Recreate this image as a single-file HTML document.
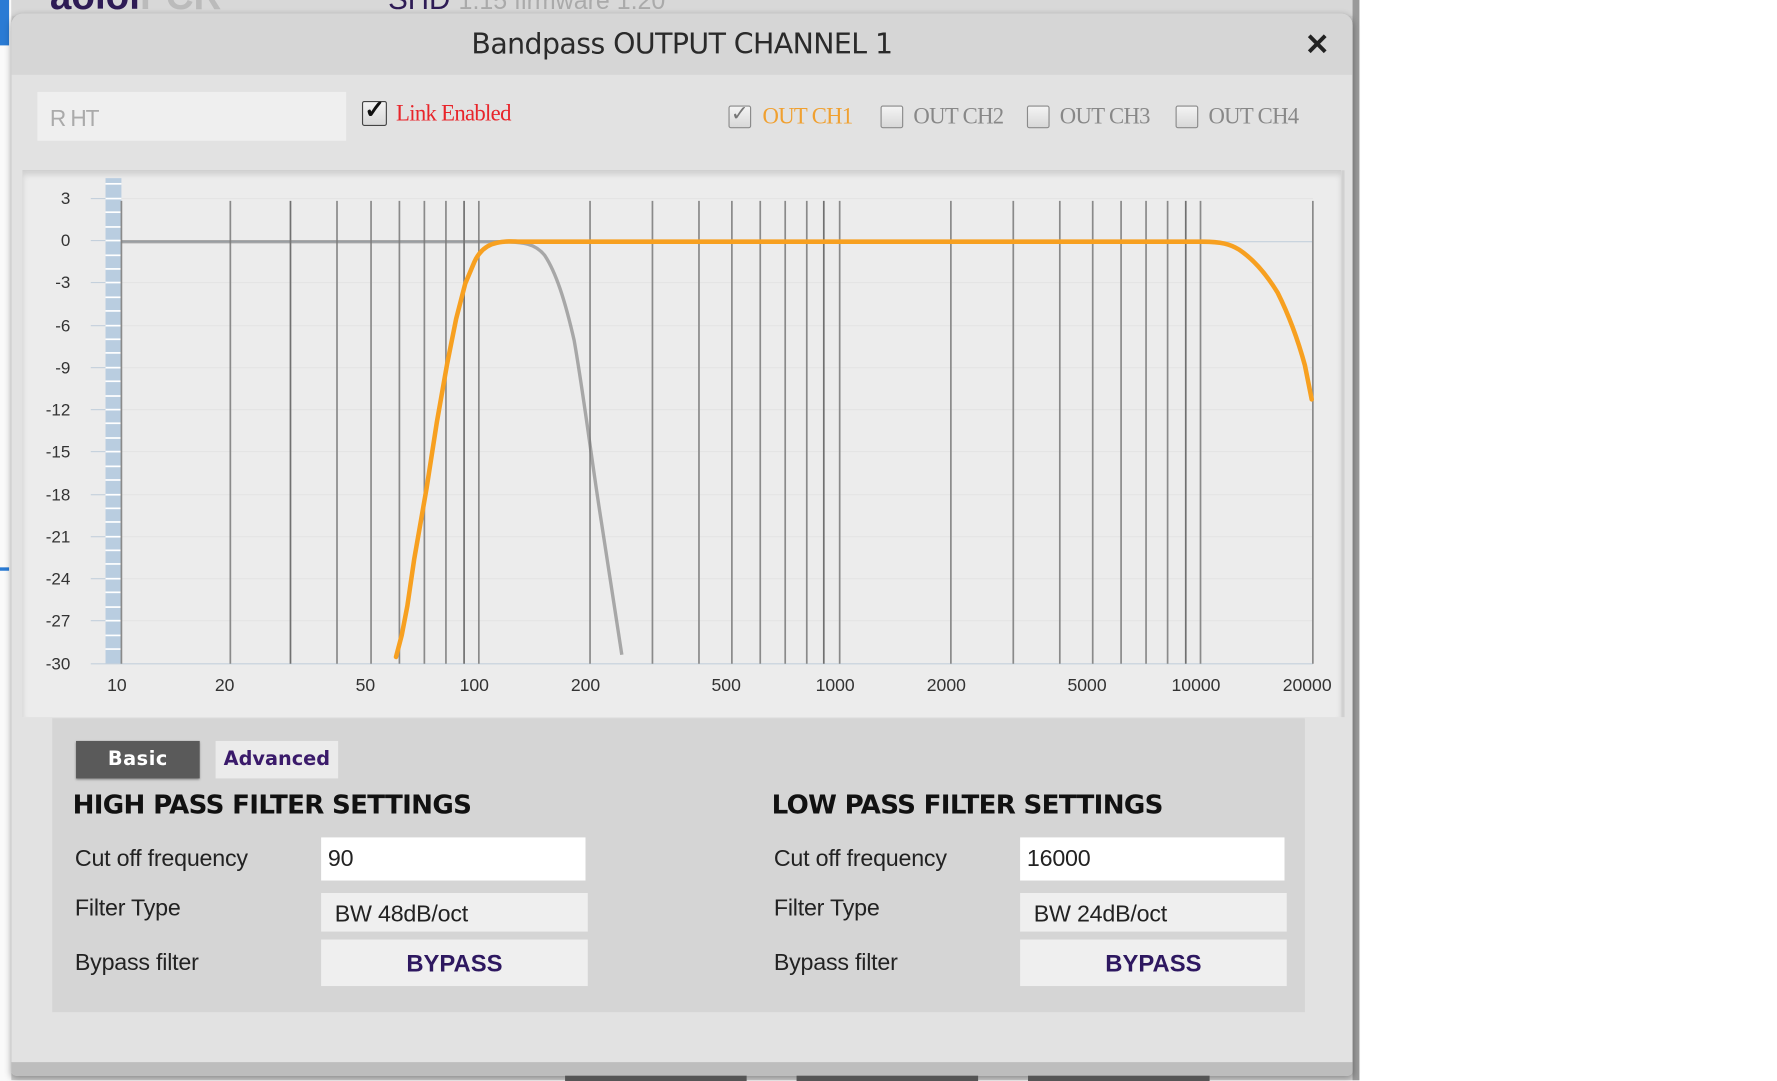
<!DOCTYPE html>
<html><head><meta charset="utf-8"><style>
html,body{margin:0;padding:0;width:1777px;height:1080px;overflow:hidden;background:#fff;font-family:"Liberation Sans",Arial,sans-serif}
#w{position:absolute;left:0;top:0;width:1566px;height:952px;transform:scale(1.1347);transform-origin:0 0}
.a{position:absolute}
.lbl{position:absolute;font-size:20.5px;color:#222;letter-spacing:-0.2px}
.serif{font-family:"Liberation Serif",serif}
.cb{position:absolute;width:20px;height:20px;border:1px solid #8a8a8a;background:linear-gradient(#f4f4f4,#d8d8d8);box-sizing:border-box;border-radius:2px}
</style></head><body><div id="w">
<div class="a" style="left:0;top:0;width:1198px;height:952px;background:#cfcfcf"></div>
<div class="a" style="left:0;top:0;width:10px;height:952px;background:#fafafa"></div>
<div class="a" style="left:0;top:0;width:8px;height:40px;background:#2a7bd4"></div>
<div class="a" style="left:0;top:500px;width:8px;height:3px;background:#2a7bd4"></div>
<div class="a" style="left:10px;top:0;width:1188px;height:14px;background:#d8d8d8"></div>
<div class="a" style="left:44px;top:-22px;font-size:34px;font-weight:bold;color:#2e1b55">aoiol<span style="color:#bbb">PCR</span></div>
<div class="a" style="left:342px;top:-16px;font-size:26px;color:#2e1b55">SHD <span style="color:#aaa;font-size:22px">1.15 firmware 1.20</span></div>
<div class="a" style="left:1192px;top:0;width:6px;height:952px;background:#9a9a9a"></div>
<div class="a" style="left:10px;top:12px;width:1182px;height:936px;background:#e2e2e2;border-radius:10px 10px 4px 4px;box-shadow:0 2px 6px rgba(0,0,0,.35)"></div>
<div class="a" style="left:10px;top:12px;width:1182px;height:54px;background:#d6d6d6;border-radius:10px 10px 0 0"></div>
<div class="a" style="left:10px;top:936px;width:1182px;height:12px;background:#bdbdbd;border-radius:0 0 4px 4px"></div>
<div class="a" style="left:10px;top:24px;width:1182px;text-align:center;font-family:'DejaVu Sans',sans-serif;font-size:25px;color:#2a2a2a;letter-spacing:-0.5px">Bandpass OUTPUT CHANNEL 1</div>
<div class="a" style="left:1150px;top:24px;font-size:26px;font-weight:bold;color:#222">✕</div>
<div class="a" style="left:33px;top:81px;width:272px;height:43px;background:#efefef"></div>
<div class="a" style="left:44px;top:94px;font-size:20px;color:#aaa;letter-spacing:-1px">R HT</div>
<div class="cb" style="left:319px;top:89px;width:22px;height:22px;border-color:#444"></div>
<div class="a" style="left:321px;top:84px;font-size:22px;font-weight:bold;color:#111">✓</div>
<div class="a serif" style="left:349px;top:89px;font-size:20px;color:#e8242a;letter-spacing:-0.6px">Link Enabled</div>
<div class="cb" style="left:642px;top:93px"></div><div class="a" style="left:644px;top:89px;font-size:19px;color:#777">✓</div>
<div class="a serif" style="left:672px;top:92px;font-size:20px;color:#f0a030;letter-spacing:-0.6px">OUT CH1</div>
<div class="cb" style="left:776px;top:93px"></div>
<div class="a serif" style="left:805px;top:92px;font-size:20px;color:#888;letter-spacing:-0.6px">OUT CH2</div>
<div class="cb" style="left:905px;top:93px"></div>
<div class="a serif" style="left:934px;top:92px;font-size:20px;color:#888;letter-spacing:-0.6px">OUT CH3</div>
<div class="cb" style="left:1036px;top:93px"></div>
<div class="a serif" style="left:1065px;top:92px;font-size:20px;color:#888;letter-spacing:-0.6px">OUT CH4</div>
<div class="a" style="left:20px;top:150px;width:1162px;height:482px;background:#ececec;box-shadow:inset 0 4px 5px rgba(0,0,0,.12);border-right:3px solid #d0d0d0"></div>
<svg class="a" style="left:0;top:0" width="1198" height="640">
<rect x="93" y="157" width="14" height="428" fill="#b9cde0"/>
<g stroke="#fff" stroke-width="1.5">
<line x1="93" y1="162" x2="107" y2="162"/><line x1="93" y1="175" x2="107" y2="175"/><line x1="93" y1="187" x2="107" y2="187"/><line x1="93" y1="200" x2="107" y2="200"/><line x1="93" y1="212" x2="107" y2="212"/><line x1="93" y1="225" x2="107" y2="225"/><line x1="93" y1="237" x2="107" y2="237"/><line x1="93" y1="249" x2="107" y2="249"/><line x1="93" y1="262" x2="107" y2="262"/><line x1="93" y1="274" x2="107" y2="274"/><line x1="93" y1="287" x2="107" y2="287"/><line x1="93" y1="299" x2="107" y2="299"/><line x1="93" y1="311" x2="107" y2="311"/><line x1="93" y1="324" x2="107" y2="324"/><line x1="93" y1="336" x2="107" y2="336"/><line x1="93" y1="349" x2="107" y2="349"/><line x1="93" y1="361" x2="107" y2="361"/><line x1="93" y1="373" x2="107" y2="373"/><line x1="93" y1="386" x2="107" y2="386"/><line x1="93" y1="398" x2="107" y2="398"/><line x1="93" y1="411" x2="107" y2="411"/><line x1="93" y1="423" x2="107" y2="423"/><line x1="93" y1="436" x2="107" y2="436"/><line x1="93" y1="448" x2="107" y2="448"/><line x1="93" y1="460" x2="107" y2="460"/><line x1="93" y1="473" x2="107" y2="473"/><line x1="93" y1="485" x2="107" y2="485"/><line x1="93" y1="497" x2="107" y2="497"/><line x1="93" y1="510" x2="107" y2="510"/><line x1="93" y1="522" x2="107" y2="522"/><line x1="93" y1="535" x2="107" y2="535"/><line x1="93" y1="547" x2="107" y2="547"/><line x1="93" y1="560" x2="107" y2="560"/><line x1="93" y1="572" x2="107" y2="572"/>
</g>
<g stroke="#e4e4e4" stroke-width="1">
<line x1="107" y1="175" x2="1157" y2="175"/><line x1="107" y1="249" x2="1157" y2="249"/><line x1="107" y1="287" x2="1157" y2="287"/><line x1="107" y1="324" x2="1157" y2="324"/><line x1="107" y1="361" x2="1157" y2="361"/><line x1="107" y1="398" x2="1157" y2="398"/><line x1="107" y1="436" x2="1157" y2="436"/><line x1="107" y1="473" x2="1157" y2="473"/><line x1="107" y1="510" x2="1157" y2="510"/><line x1="107" y1="547" x2="1157" y2="547"/>
</g>
<g stroke="#c4d0dc" stroke-width="1">
<line x1="80" y1="175" x2="93" y2="175"/><line x1="80" y1="212" x2="93" y2="212"/><line x1="80" y1="249" x2="93" y2="249"/><line x1="80" y1="287" x2="93" y2="287"/><line x1="80" y1="324" x2="93" y2="324"/><line x1="80" y1="361" x2="93" y2="361"/><line x1="80" y1="398" x2="93" y2="398"/><line x1="80" y1="436" x2="93" y2="436"/><line x1="80" y1="473" x2="93" y2="473"/><line x1="80" y1="510" x2="93" y2="510"/><line x1="80" y1="547" x2="93" y2="547"/><line x1="80" y1="585" x2="1157" y2="585"/>
<line x1="107" y1="213" x2="1157" y2="213"/>
</g>
<g stroke="#8a8a8a" stroke-width="1.5">
<line x1="107" y1="177" x2="107" y2="585"/>
<line x1="203" y1="177" x2="203" y2="585"/><line x1="256" y1="177" x2="256" y2="585" stroke="#707070"/><line x1="297" y1="177" x2="297" y2="585"/><line x1="327" y1="177" x2="327" y2="585"/><line x1="352" y1="177" x2="352" y2="585"/><line x1="374" y1="177" x2="374" y2="585"/><line x1="393" y1="177" x2="393" y2="585"/><line x1="409" y1="177" x2="409" y2="585" stroke="#707070"/><line x1="422" y1="177" x2="422" y2="585"/>
<line x1="520" y1="177" x2="520" y2="585"/><line x1="575" y1="177" x2="575" y2="585"/><line x1="616" y1="177" x2="616" y2="585"/><line x1="645" y1="177" x2="645" y2="585"/><line x1="670" y1="177" x2="670" y2="585"/><line x1="692" y1="177" x2="692" y2="585"/><line x1="711" y1="177" x2="711" y2="585"/><line x1="726" y1="177" x2="726" y2="585" stroke="#707070"/><line x1="740" y1="177" x2="740" y2="585"/>
<line x1="838" y1="177" x2="838" y2="585"/><line x1="893" y1="177" x2="893" y2="585"/><line x1="934" y1="177" x2="934" y2="585"/><line x1="963" y1="177" x2="963" y2="585"/><line x1="988" y1="177" x2="988" y2="585"/><line x1="1010" y1="177" x2="1010" y2="585"/><line x1="1029" y1="177" x2="1029" y2="585"/><line x1="1045" y1="177" x2="1045" y2="585" stroke="#707070"/><line x1="1058" y1="177" x2="1058" y2="585"/><line x1="1157" y1="177" x2="1157" y2="585"/>
</g>
<path d="M107 213 L440 213 C462 213 472 215 480 225 C490 240 498 265 506 300 C514 345 522 410 530 460 C538 510 543 545 548 577" fill="none" stroke="#7a7a7a" stroke-width="3" opacity=".6"/>
<path d="M349 579 L354 560 L359 534 L365 493 L376 430 L385 372 L394 321 L402 281 L410 250 L418 231 C422 222 428 216 438 214 C446 212 452 213 461 213 L1060 213 C1076 213 1084 215 1092 220 C1104 228 1115 240 1126 258 C1136 278 1144 300 1150 322 L1156 352" fill="none" stroke="#f7a020" stroke-width="4" stroke-linejoin="round" stroke-linecap="round"/>
<g font-family="Liberation Sans,Arial,sans-serif" font-size="15" fill="#333" text-anchor="end">
<text x="62" y="180">3</text><text x="62" y="217">0</text><text x="62" y="254">-3</text><text x="62" y="292">-6</text><text x="62" y="329">-9</text><text x="62" y="366">-12</text><text x="62" y="403">-15</text><text x="62" y="441">-18</text><text x="62" y="478">-21</text><text x="62" y="515">-24</text><text x="62" y="552">-27</text><text x="62" y="590">-30</text>
</g>
<g font-family="Liberation Sans,Arial,sans-serif" font-size="15.5" fill="#333" text-anchor="middle">
<text x="103" y="609">10</text><text x="198" y="609">20</text><text x="322" y="609">50</text><text x="418" y="609">100</text><text x="516" y="609">200</text><text x="640" y="609">500</text><text x="736" y="609">1000</text><text x="834" y="609">2000</text><text x="958" y="609">5000</text><text x="1054" y="609">10000</text><text x="1152" y="609">20000</text>
</g>
</svg>
<div class="a" style="left:46px;top:633px;width:1104px;height:259px;background:#d5d5d5"></div>
<div class="a" style="left:67px;top:653px;width:109px;height:33px;background:#5a5a5a;box-shadow:0 1px 2px rgba(0,0,0,.4);color:#fff;font-family:'DejaVu Sans',sans-serif;font-weight:bold;font-size:17px;text-align:center;line-height:33px;letter-spacing:0.5px">Basic</div>
<div class="a" style="left:190px;top:653px;width:108px;height:33px;background:#ebebeb;color:#3a1a6a;font-family:'DejaVu Sans',sans-serif;font-weight:bold;font-size:17px;text-align:center;line-height:33px">Advanced</div>
<div class="a" style="left:64px;top:697px;font-family:'DejaVu Sans',sans-serif;font-weight:bold;font-size:23px;color:#111;letter-spacing:-0.6px">HIGH PASS FILTER SETTINGS</div>
<div class="a" style="left:680px;top:697px;font-family:'DejaVu Sans',sans-serif;font-weight:bold;font-size:23px;color:#111;letter-spacing:-0.6px">LOW PASS FILTER SETTINGS</div>
<div class="lbl" style="left:66px;top:745px">Cut off frequency</div>
<div class="lbl" style="left:66px;top:789px">Filter Type</div>
<div class="lbl" style="left:66px;top:837px">Bypass filter</div>
<div class="lbl" style="left:682px;top:745px">Cut off frequency</div>
<div class="lbl" style="left:682px;top:789px">Filter Type</div>
<div class="lbl" style="left:682px;top:837px">Bypass filter</div>
<div class="a" style="left:283px;top:738px;width:233px;height:38px;background:#fff"></div>
<div class="lbl" style="left:289px;top:745px">90</div>
<div class="a" style="left:283px;top:787px;width:235px;height:34px;background:#efefef"></div>
<div class="lbl" style="left:295px;top:794px">BW 48dB/oct</div>
<div class="a" style="left:283px;top:828px;width:235px;height:41px;background:#efefef;text-align:center;line-height:43px;font-weight:bold;font-size:21px;color:#2e1860">BYPASS</div>
<div class="a" style="left:899px;top:738px;width:233px;height:38px;background:#fff"></div>
<div class="lbl" style="left:905px;top:745px">16000</div>
<div class="a" style="left:899px;top:787px;width:235px;height:34px;background:#efefef"></div>
<div class="lbl" style="left:911px;top:794px">BW 24dB/oct</div>
<div class="a" style="left:899px;top:828px;width:235px;height:41px;background:#efefef;text-align:center;line-height:43px;font-weight:bold;font-size:21px;color:#2e1860">BYPASS</div>
<div class="a" style="left:498px;top:948px;width:160px;height:5px;background:#555"></div>
<div class="a" style="left:702px;top:948px;width:160px;height:5px;background:#555"></div>
<div class="a" style="left:906px;top:948px;width:160px;height:5px;background:#555"></div>
</div></body></html>
